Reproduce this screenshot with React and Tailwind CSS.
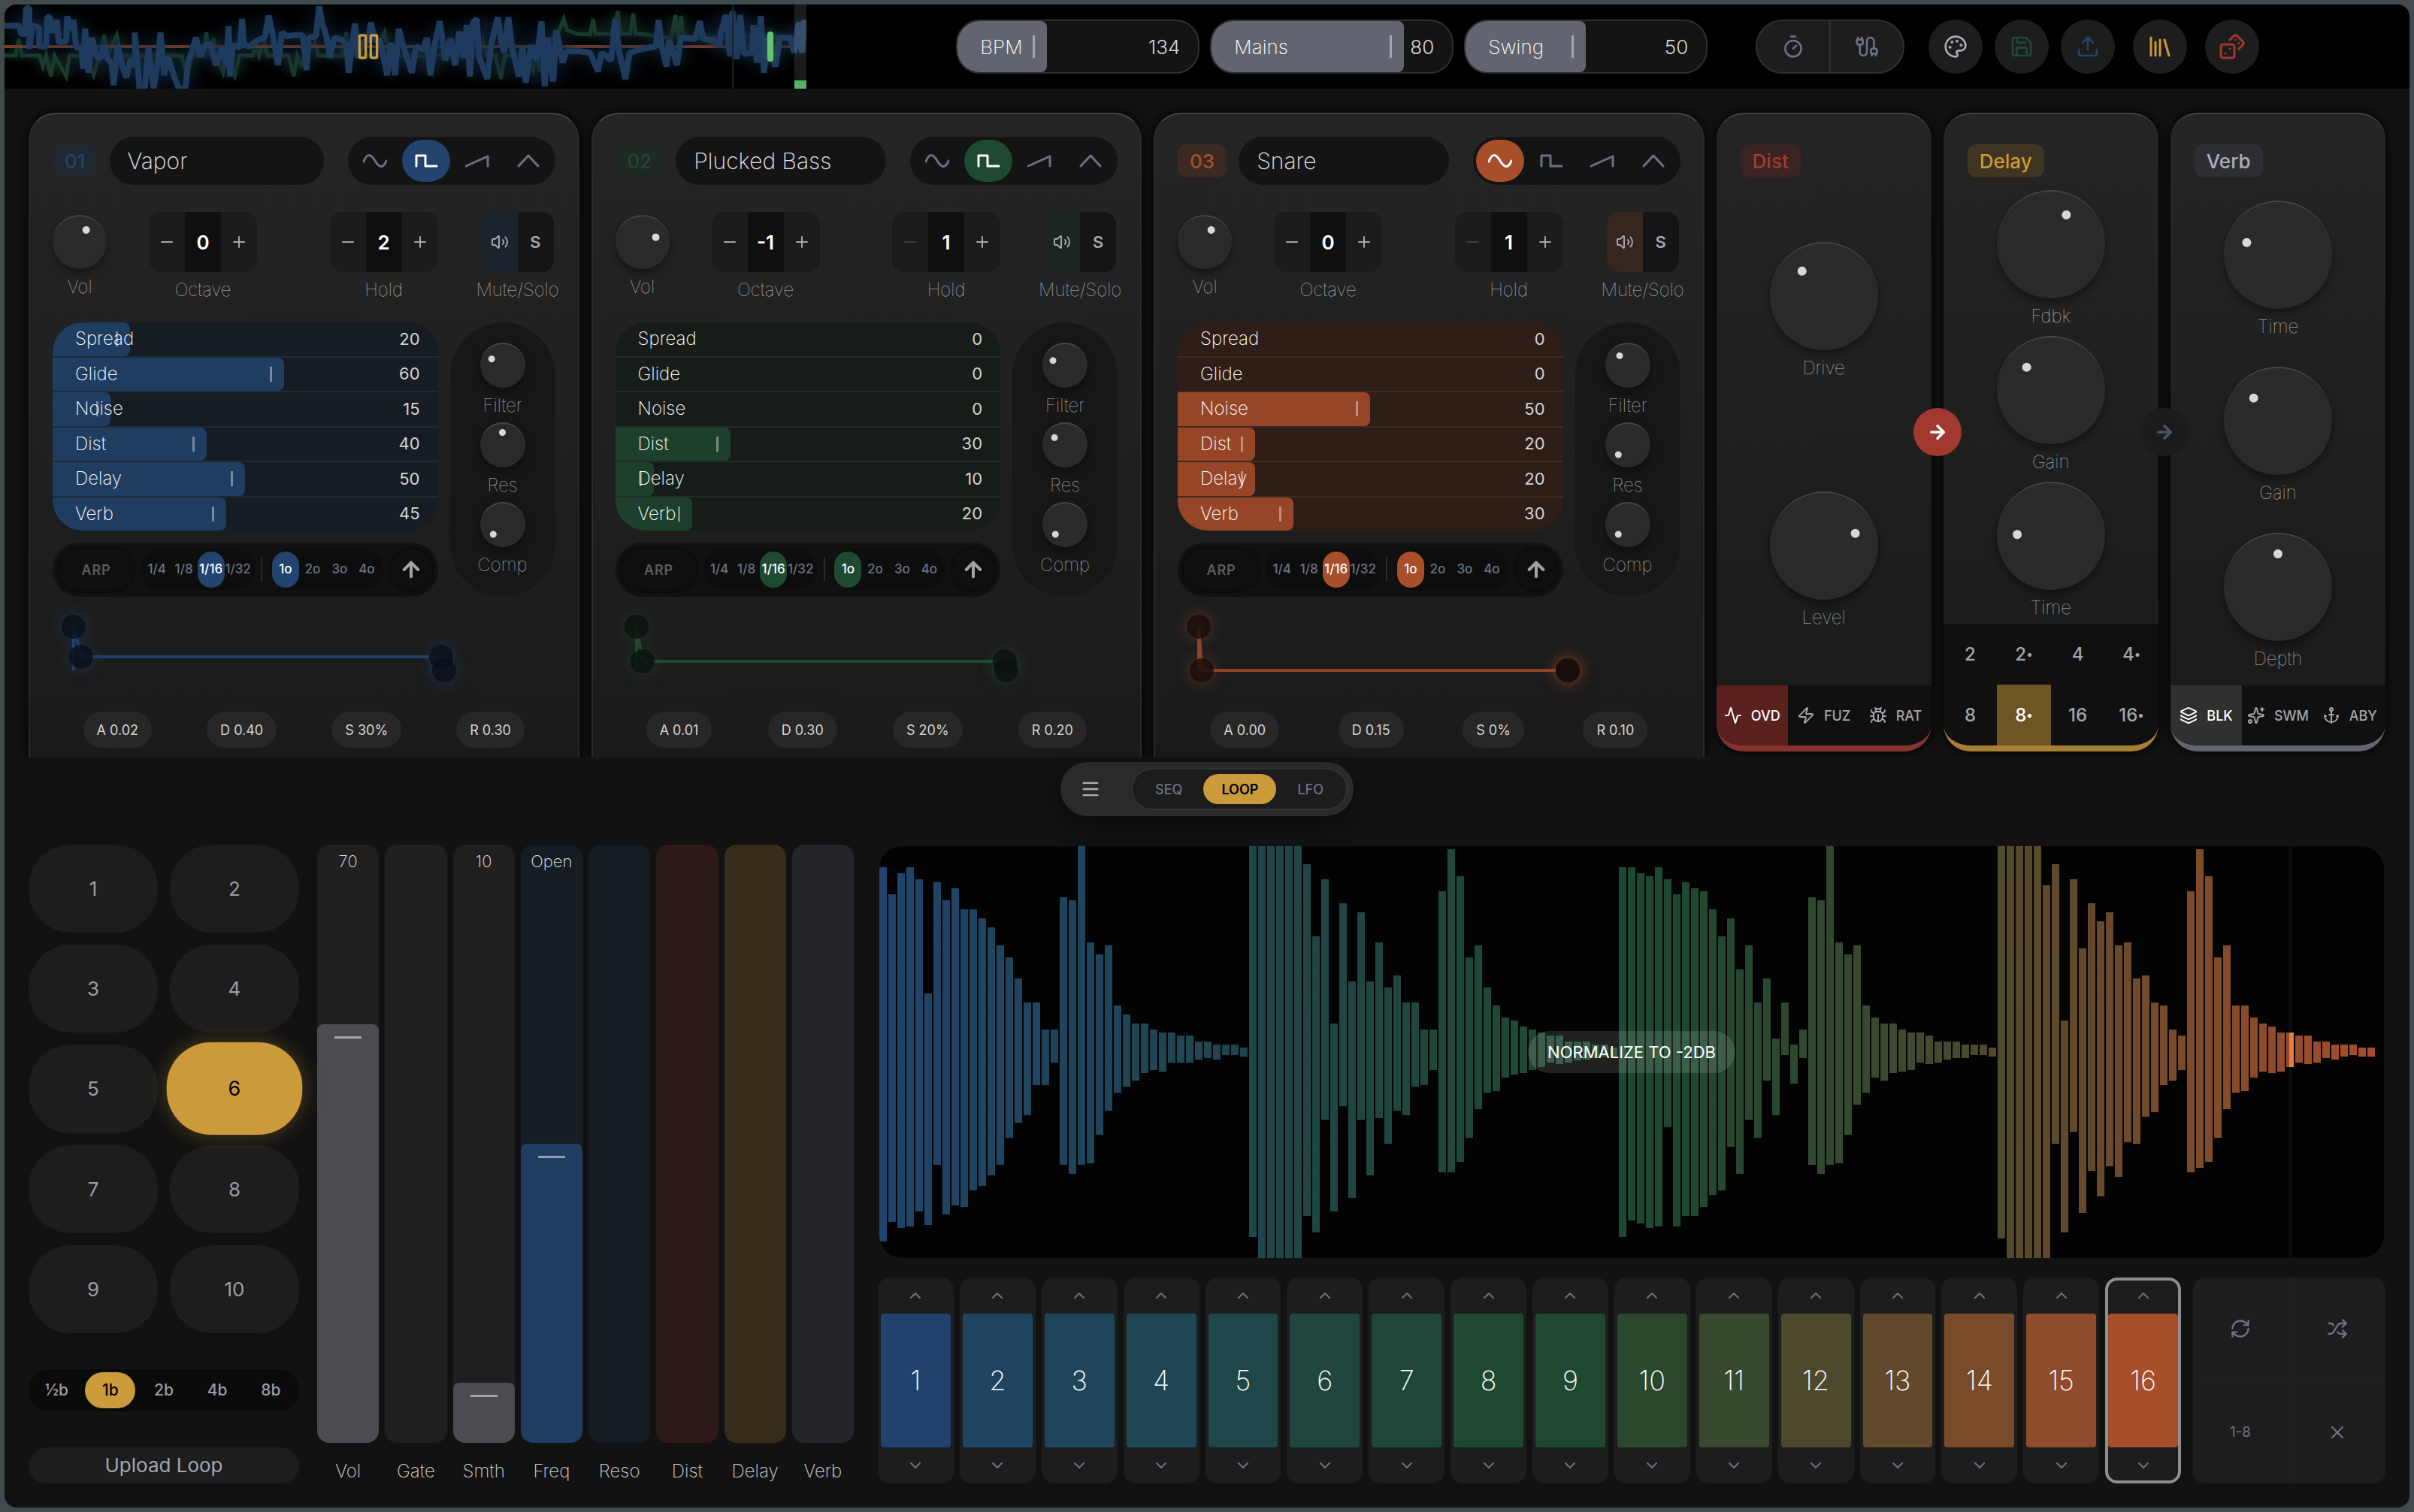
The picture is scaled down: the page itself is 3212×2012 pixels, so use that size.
import React, { useState } from 'react';
import {
  Activity,
  Anchor,
  ArrowRight,
  ArrowUp,
  Bug,
  Cable,
  ChevronDown,
  ChevronUp,
  Dices,
  Layers,
  Library,
  Menu,
  Minus,
  Palette,
  Pause,
  Plus,
  RefreshCw,
  Save,
  Shuffle,
  Sparkles,
  Timer,
  Upload,
  Volume2,
  X,
  Zap,
} from 'lucide-react';
import clsx from 'clsx';

const ACCENTS = {
  blue: {
    badge: 'bg-[#20282f] text-[#22426e]',
    active: 'bg-[#22446e]',
    fill: 'bg-[#1f3d61]',
    box: 'bg-[#161c23]',
    line: 'border-[#222a32]',
    mute: 'bg-[#1b242d]',
    stroke: '#1f4069',
    node: '#0a0f16',
    glow: '#22446e',
  },
  green: {
    badge: 'bg-[#202824] text-[#1e4931]',
    active: 'bg-[#1f4a32]',
    fill: 'bg-[#1d402d]',
    box: 'bg-[#161d19]',
    line: 'border-[#232c28]',
    mute: 'bg-[#1c2521]',
    stroke: '#1f4a32',
    node: '#0a120d',
    glow: '#1f4a32',
  },
  orange: {
    badge: 'bg-[#3a2a23] text-[#a84e2a]',
    active: 'bg-[#a84e2a]',
    fill: 'bg-[#964627]',
    box: 'bg-[#2f1d17]',
    line: 'border-[#3d2b25]',
    mute: 'bg-[#38251e]',
    stroke: '#8f4427',
    node: '#170d09',
    glow: '#8f4427',
  },
};

const SYNTHS = [
  {
    id: '01',
    name: 'Vapor',
    accent: 'blue',
    wave: 'square',
    vol: 60,
    octave: 0,
    hold: 2,
    params: { Spread: 20, Glide: 60, Noise: 15, Dist: 40, Delay: 50, Verb: 45 },
    knobs: { Filter: 28, Res: 50, Comp: 0 },
    env: [[28, 40], [38, 80], [517, 80], [521, 98]],
    adsr: ['A 0.02', 'D 0.40', 'S 30%', 'R 0.30'],
  },
  {
    id: '02',
    name: 'Plucked Bass',
    accent: 'green',
    wave: 'square',
    vol: 75,
    octave: -1,
    hold: 1,
    params: { Spread: 0, Glide: 0, Noise: 0, Dist: 30, Delay: 10, Verb: 20 },
    knobs: { Filter: 25, Res: 30, Comp: 0 },
    env: [[28, 40], [36, 86], [518, 86], [520, 98]],
    adsr: ['A 0.01', 'D 0.30', 'S 20%', 'R 0.20'],
  },
  {
    id: '03',
    name: 'Snare',
    accent: 'orange',
    wave: 'sine',
    vol: 60,
    octave: 0,
    hold: 1,
    params: { Spread: 0, Glide: 0, Noise: 50, Dist: 20, Delay: 20, Verb: 30 },
    knobs: { Filter: 35, Res: 0, Comp: 0 },
    env: [[28, 40], [32, 98], [519, 98], [519, 98]],
    adsr: ['A 0.00', 'D 0.15', 'S 0%', 'R 0.10'],
  },
];

const WAVES = {
  sine: 'M1 17C5 6 10 6 16 16S27 26 31 16',
  square: 'M3 23V9H15V23H30',
  saw: 'M1 23L30 10V23',
  tri: 'M3 23L16 9L29 23',
};

const FADERS = [
  { name: 'Vol', value: 70, top: '70', track: 'bg-[#1f1f1f]', fill: 'bg-[#4b4c51]' },
  { name: 'Gate', value: 0, top: '', track: 'bg-[#1f1f1f]', fill: 'bg-[#4b4c51]' },
  { name: 'Smth', value: 10, top: '10', track: 'bg-[#1f1f1f]', fill: 'bg-[#4b4c51]' },
  { name: 'Freq', value: 50, top: 'Open', track: 'bg-[#161c23]', fill: 'bg-[#1f3d61]' },
  { name: 'Reso', value: 0, top: '', track: 'bg-[#161c23]', fill: 'bg-[#1f3d61]' },
  { name: 'Dist', value: 0, top: '', track: 'bg-[#2e1919]', fill: 'bg-[#9f372e]' },
  { name: 'Delay', value: 0, top: '', track: 'bg-[#372b1a]', fill: 'bg-[#cb9a3a]' },
  { name: 'Verb', value: 0, top: '', track: 'bg-[#24252a]', fill: 'bg-[#62656f]' },
];

const SLICES = [
  '#20426c', '#1f4461', '#1f455b', '#1f4654', '#1f4648', '#1f4740', '#1f4738', '#1e4930',
  '#1e4830', '#2b482f', '#39492e', '#4c492c', '#62492b', '#794b2a', '#904b2a', '#a84e2a',
];

// [above, below] the centre line
const PEAKS = [
  [246, 252], [210, 226], [238, 234], [246, 232], [230, 212], [78, 230], [226, 150], [202, 216],
  [218, 204], [190, 206], [190, 184], [178, 178], [166, 164], [142, 150], [126, 114], [98, 94],
  [66, 84], [66, 44], [30, 44], [30, 14], [206, 150], [202, 162], [274, 150], [146, 148],
  [130, 110], [142, 78], [62, 54], [50, 46], [38, 38], [38, 28], [30, 24], [26, 26],
  [26, 14], [22, 14], [22, 14], [14, 10], [14, 8], [10, 10], [10, 4], [10, 4],
  [6, 6], [274, 246], [274, 274], [274, 274], [274, 274], [274, 274], [274, 274], [250, 218],
  [154, 240], [230, 90], [38, 212], [198, 72], [94, 194], [186, 90], [94, 164], [146, 88],
  [86, 122], [102, 78], [66, 84], [66, 46], [30, 44], [30, 24], [214, 160], [270, 160],
  [234, 146], [126, 114], [142, 76], [86, 54], [62, 52], [46, 34], [42, 30], [34, 28],
  [30, 24], [26, 20], [22, 14], [22, 16], [14, 14], [14, 11], [14, 10], [10, 8],
  [10, 6], [6, 6], [246, 246], [246, 224], [238, 228], [234, 234], [246, 232], [230, 100],
  [210, 232], [226, 218], [218, 218], [214, 206], [190, 190], [154, 184], [178, 126], [110, 162],
  [142, 90], [66, 114], [98, 38], [18, 84], [66, 4], [10, 42], [30, 8], [206, 150],
  [202, 162], [274, 150], [146, 148], [130, 110], [142, 70], [62, 54], [46, 34], [38, 38],
  [38, 28], [30, 26], [26, 24], [26, 14], [22, 16], [14, 14], [14, 10], [14, 8],
  [10, 8], [10, 4], [10, 4], [6, 6], [274, 248], [274, 274], [274, 274], [274, 274],
  [274, 274], [222, 274], [250, 122], [42, 240], [230, 106], [138, 214], [198, 158], [174, 192],
  [186, 152], [142, 166], [146, 120], [98, 122], [102, 86], [66, 80], [62, 44], [30, 38],
  [22, 24], [214, 160], [270, 154], [234, 146], [126, 114], [142, 76], [62, 54], [62, 52],
  [46, 34], [38, 26], [34, 28], [26, 26], [26, 20], [22, 14], [22, 16], [14, 14],
  [14, 8], [10, 10], [10, 6], [10, 4], [6, 6], [6, 6],
];

function HiddenRange({ label, value, min = 0, max = 100 }) {
  return (
    <input
      type="range"
      aria-label={label}
      min={min}
      max={max}
      defaultValue={value}
      className="absolute inset-0 w-full h-full opacity-0 cursor-pointer"
    />
  );
}

function Knob({ label, value, size, dot, className }) {
  return (
    <div className={clsx('flex flex-col items-center', className)}>
      <div
        className={clsx(
          'relative rounded-full bg-[#2a2a2a] border-t-2 border-t-[#454545] shadow-[0_6px_12px_rgba(0,0,0,0.4)]',
          size
        )}
      >
        <div
          className="absolute inset-0 flex justify-center"
          style={{ transform: `rotate(${value * 2.7 - 135}deg)` }}
        >
          <div className={clsx('rounded-full bg-[#d8d8d8]', dot)} />
        </div>
        <HiddenRange label={label} value={value} />
      </div>
      <span className="mt-2 text-2xl leading-8 font-thin text-[#c4c4c4]">{label}</span>
    </div>
  );
}

function TopSlider({ label, value, percent, max }) {
  return (
    <div className="relative w-[324px] h-18 rounded-[32px] border-2 border-[#2f3034] bg-[#141414] overflow-hidden flex items-center justify-between pl-[30px] pr-6 text-[26px]">
      <div
        className="absolute inset-y-0 left-0 rounded-r-lg bg-[#62656f] flex items-center justify-end pr-4"
        style={{ width: `${percent}%` }}
      >
        <span className="w-[3px] h-[30px] bg-[#a3a6ad]" />
      </div>
      <span className="relative font-extralight text-white">{label}</span>
      <span className="relative text-[#d6d6d6] font-light">{value}</span>
      <HiddenRange label={label} value={value} max={max} />
    </div>
  );
}

function RoundButton({ label, className, children }) {
  return (
    <button
      aria-label={label}
      className={clsx('size-18 rounded-full bg-[#1d1d1d] flex items-center justify-center', className)}
    >
      {children}
    </button>
  );
}

const SCOPE_BLUE =
  '9,103 38,103 40,135 48,135 50,32 56,32 56,195 62,100 75,112 75,185 88,185 90,68 95,68 100,130 108,80 112,170 126,165 128,65 133,120 140,80 145,190 155,190 158,275 162,115 168,290 175,150 185,230 192,230 197,180 205,235 212,250 216,340 224,180 232,260 240,310 248,235 258,265 256,130 262,260 265,354 275,354 282,190 292,352 300,240 305,130 312,300 320,230 330,300 340,354 352,354 358,240 364,210 372,150 380,225 390,180 400,175 410,260 422,190 430,265 434,105 437,305 442,180 455,190 460,75 463,180 474,185 490,160 503,150 510,62 518,140 528,260 535,130 545,145 560,140 575,140 582,280 586,150 600,145 606,25 612,95 620,145 626,230 635,150 650,160 658,180 662,290 668,185 674,95 680,230 688,170 700,160 704,90 712,160 722,165 735,300 742,170 750,300 757,115 765,180 782,290 790,185 805,200 810,150 817,300 825,180 835,85 845,240 855,155 864,260 872,125 880,230 886,100 892,305 898,90 905,75 910,230 925,315 932,180 945,70 952,170 957,210 965,70 972,190 985,305 992,185 998,330 1008,180 1018,240 1028,85 1034,345 1040,150 1050,325 1056,120 1068,250 1075,205 1100,205 1120,210 1135,285 1142,210 1160,240 1168,75 1175,205 1187,315 1195,210 1220,195 1245,185 1250,80 1256,185 1265,265 1270,160 1285,260 1292,150 1320,155 1328,85 1335,155 1355,160 1365,185 1368,130 1378,60 1385,220 1390,45 1398,235 1405,60 1412,215 1427,210 1430,100 1437,250 1444,65 1450,290 1457,150 1472,265 1480,150 1500,150 1507,210 1516,90 1522,210 1526,80 1530,150';

const SCOPE_GREEN =
  '9,222 30,222 36,155 42,222 75,222 82,265 88,222 97,305 104,222 126,305 132,222 150,222 165,222 178,300 190,222 198,140 204,222 222,140 230,222 330,222 345,222 355,300 365,222 388,222 392,130 398,222 406,155 412,222 424,290 432,222 446,300 455,222 480,222 486,165 492,222 502,170 508,222 548,222 558,305 564,222 572,260 580,222 598,170 604,222 650,222 657,130 663,222 710,222 730,130 738,222 810,222 818,300 826,222 900,222 916,160 924,222 940,222 951,315 958,222 1000,222 1012,280 1018,222 1026,285 1034,190 1048,150 1060,130 1070,75 1076,120 1095,135 1120,138 1126,75 1130,135 1160,135 1173,45 1178,135 1196,135 1202,55 1206,135 1230,138 1250,148 1274,150 1282,60 1286,150 1293,65 1297,150 1345,150 1350,190 1354,150 1382,150 1386,225 1390,150 1507,146 1530,150';

function Scope() {
  return (
    <button aria-label="Pause" className="relative w-1/3 h-28 overflow-hidden bg-black flex items-center">
      <svg
        viewBox="9 18 1521 336"
        preserveAspectRatio="none"
        className="absolute inset-0 w-full h-full"
        fill="none"
      >
        <g style={{ filter: 'drop-shadow(0 0 14px #1b3a2c)' }}>
          <polyline points={SCOPE_GREEN} stroke="#1b3a2c" strokeWidth="5" vectorEffect="non-scaling-stroke" />
        </g>
        <path d="M9 186H1507" stroke="#7d3f2a" strokeWidth="4" vectorEffect="non-scaling-stroke" />
        <g style={{ filter: 'drop-shadow(0 0 20px #10253d)' }}>
          <polyline
            points={SCOPE_BLUE}
            stroke="#1e3a5c"
            strokeWidth="8"
            strokeLinejoin="bevel"
            vectorEffect="non-scaling-stroke"
          />
        </g>
        <path d="M1391 18V354" stroke="#1c2229" strokeWidth="2" vectorEffect="non-scaling-stroke" />
      </svg>
      <div className="absolute inset-y-0 right-0 w-4 bg-white/10 flex items-end">
        <div className="w-full h-[11px] bg-[#55b269]" />
      </div>
      <div className="absolute right-11 w-2 h-10 rounded-full bg-[#62c474] shadow-[0_0_12px_#2f6d5b]" />
      <Pause size={40} className="relative ml-[464px] text-[#cb9a3a]" />
    </button>
  );
}

function TopBar() {
  return (
    <header className="flex items-center h-28 bg-black">
      <Scope />
      <div className="flex-1 flex items-center justify-center">
        <div className="flex gap-[14px]">
          <TopSlider label="BPM" value={134} percent={37} max={300} />
          <TopSlider label="Mains" value={80} percent={80} max={100} />
          <TopSlider label="Swing" value={50} percent={50} max={100} />
        </div>
        <div className="ml-16 flex w-[198px] h-18 rounded-full border-2 border-[#2f3034] bg-[#1d1d1d] text-gray-500">
          <button aria-label="Metronome" className="flex-1 flex items-center justify-center border-r-2 border-[#2f3034]">
            <Timer size={32} />
          </button>
          <button aria-label="Midi" className="flex-1 flex items-center justify-center">
            <Cable size={32} />
          </button>
        </div>
        <RoundButton label="Theme" className="ml-8 text-[#abaeb6]">
          <Palette size={32} />
        </RoundButton>
        <RoundButton label="Save" className="ml-4 text-[#1f4a32]">
          <Save size={32} />
        </RoundButton>
        <RoundButton label="Export" className="ml-4 text-[#22446e]">
          <Upload size={32} />
        </RoundButton>
        <RoundButton label="Library" className="ml-6 text-[#cb9a3a]">
          <Library size={36} />
        </RoundButton>
        <RoundButton label="Randomize" className="ml-6 text-[#a1392f]">
          <Dices size={36} />
        </RoundButton>
      </div>
    </header>
  );
}

function Stepper({ label, value, min }) {
  return (
    <div className="flex flex-col items-center">
      <div className="flex h-20 rounded-2xl overflow-hidden bg-[#1b1b1b] text-[#a3a6ad]">
        <button
          aria-label={`${label} down`}
          disabled={value === min}
          className="w-12 flex items-center justify-center disabled:text-[#3f3f3f]"
        >
          <Minus size={24} />
        </button>
        <output className="w-12 flex items-center justify-center bg-[#0f0f0f] text-[26px] font-semibold text-white">
          {value}
        </output>
        <button aria-label={`${label} up`} className="w-12 flex items-center justify-center">
          <Plus size={24} />
        </button>
      </div>
      <span className="mt-2 text-2xl leading-8 font-thin text-[#c4c4c4]">{label}</span>
    </div>
  );
}

function ParamRow({ label, value, accent, last }) {
  return (
    <div
      className={clsx(
        'relative flex-1 flex items-center justify-between pl-[30px] pr-6',
        !last && 'border-b-2',
        accent.line
      )}
    >
      {value > 0 && (
        <div
          className={clsx('absolute inset-y-0 left-0 rounded-r-lg flex items-center justify-end pr-4', accent.fill)}
          style={{ width: `${value}%` }}
        >
          <span className="w-[3px] h-5 bg-white/40" />
        </div>
      )}
      <span className="relative text-2xl font-extralight text-white">{label}</span>
      <span className="relative text-[22px] text-[#d4d4d4]">{value}</span>
      <HiddenRange label={label} value={value} />
    </div>
  );
}

function PillGroup({ items, active, onSelect, accent }) {
  return (
    <div className="flex p-1 rounded-full bg-[#0d0d0d]">
      {items.map((item) => (
        <button
          key={item}
          onClick={() => onSelect(item)}
          className={clsx(
            'w-9 h-12 rounded-[18px] flex items-center justify-center text-[17px] font-medium whitespace-nowrap',
            item === active ? ['text-white', accent.active] : 'text-gray-500'
          )}
        >
          {item}
        </button>
      ))}
    </div>
  );
}

function ArpBar({ accent }) {
  const [rate, setRate] = useState('1/16');
  const [range, setRange] = useState('1o');

  return (
    <div className="flex items-center justify-between h-18 px-2 rounded-full bg-[#111111]">
      <button className="w-25 h-14 rounded-full bg-[#0f0f0f] shadow-[0_0_4px_black] text-[18px] font-semibold tracking-wider text-[#5c5c5c]">
        ARP
      </button>
      <PillGroup items={['1/4', '1/8', '1/16', '1/32']} active={rate} onSelect={setRate} accent={accent} />
      <div className="w-[2px] h-8 bg-[#2c2c2c]" />
      <PillGroup items={['1o', '2o', '3o', '4o']} active={range} onSelect={setRange} accent={accent} />
      <button
        aria-label="Arp direction"
        className="size-14 rounded-full bg-[#0f0f0f] shadow-[0_0_4px_black] flex items-center justify-center text-[#a3a3a3]"
      >
        <ArrowUp size={32} strokeWidth={3} />
      </button>
    </div>
  );
}

function Envelope({ points, accent }) {
  const start = [points[0][0], 98];
  const path = [start, ...points].map((p) => p.join(',')).join(' ');

  return (
    <svg className="w-full h-[153px] overflow-visible" fill="none">
      {points.map(([x, y], i) => (
        <circle key={i} cx={x} cy={y} r="17" fill={accent.glow} fillOpacity="0.5" style={{ filter: 'blur(9px)' }} />
      ))}
      <polyline points={path} stroke={accent.stroke} strokeWidth="4" />
      {points.map(([x, y], i) => (
        <circle key={i} cx={x} cy={y} r="16" fill={accent.node} fillOpacity="0.8" />
      ))}
    </svg>
  );
}

function SynthPanel({ synth }) {
  const [wave, setWave] = useState(synth.wave);
  const accent = ACCENTS[synth.accent];
  const params = Object.entries(synth.params);

  return (
    <section className="min-w-0 h-[858px] rounded-t-[36px] border-2 border-b-0 border-[#2b2b2b] border-t-[#444444] bg-linear-to-b from-[#252525] to-[#1a1a1a] px-[30px] pt-[30px] shadow-[0_0_16px_black]">
      <div className="flex items-center">
        <span className={clsx('h-11 px-4 rounded-xl flex items-center text-[26px] font-medium', accent.badge)}>
          {synth.id}
        </span>
        <input
          aria-label="Synth name"
          defaultValue={synth.name}
          className="ml-4 mr-8 flex-1 min-w-0 h-16 px-6 rounded-full bg-[#141414] text-[30px] font-extralight text-[#e5e5e5] outline-none"
        />
        <div className="flex gap-1 p-1 rounded-full bg-[#141414]">
          {Object.entries(WAVES).map(([name, d]) => (
            <button
              key={name}
              aria-label={name}
              onClick={() => setWave(name)}
              className={clsx(
                'w-16 h-14 rounded-full flex items-center justify-center',
                wave === name ? ['text-white', accent.active] : 'text-gray-500'
              )}
            >
              <svg
                width="32"
                height="32"
                viewBox="0 0 32 32"
                fill="none"
                stroke="currentColor"
                strokeWidth="3"
                strokeLinecap="round"
                strokeLinejoin="round"
              >
                <path d={d} />
              </svg>
            </button>
          ))}
        </div>
      </div>

      <div className="mt-9 flex justify-between">
        <div className="flex gap-14">
          <Knob label="Vol" value={synth.vol} size="size-18" dot="size-[10px] mt-[11px]" className="pt-1" />
          <Stepper label="Octave" value={synth.octave} min={-3} />
        </div>
        <div className="flex gap-14">
          <Stepper label="Hold" value={synth.hold} min={1} />
          <div className="w-25 flex flex-col items-center">
            <div className="flex h-20 rounded-2xl overflow-hidden text-[#a3a6ad]">
              <button aria-label="Mute" className={clsx('w-12 flex items-center justify-center', accent.mute)}>
                <Volume2 size={24} />
              </button>
              <button aria-label="Solo" className="w-12 bg-[#151515] text-[22px] font-semibold">
                S
              </button>
            </div>
            <span className="mt-2 text-2xl leading-8 font-thin whitespace-nowrap text-[#c4c4c4]">Mute/Solo</span>
          </div>
        </div>
      </div>

      <div className="mt-[27px] flex gap-4">
        <div className="flex-1 flex flex-col gap-4">
          <div className={clsx('h-[277px] rounded-[40px] overflow-hidden flex flex-col', accent.box)}>
            {params.map(([label, value], i) => (
              <ParamRow key={label} label={label} value={value} accent={accent} last={i === params.length - 1} />
            ))}
          </div>
          <ArpBar accent={accent} />
        </div>
        <div className="w-35 rounded-full bg-[#171717] flex flex-col items-center justify-center gap-[6px]">
          {Object.entries(synth.knobs).map(([label, value]) => (
            <Knob key={label} label={label} value={value} size="size-15" dot="size-[9px] mt-[7px]" />
          ))}
        </div>
      </div>

      <Envelope points={synth.env} accent={accent} />

      <div className="flex justify-around px-1">
        {synth.adsr.map((text) => (
          <span key={text} className="h-12 px-[18px] rounded-full bg-[#272727] flex items-center text-[18px] text-[#d4d4d4]">
            {text}
          </span>
        ))}
      </div>
    </section>
  );
}

function EffectPanel({ title, badge, border, knobs, children, link }) {
  return (
    <section className="relative min-w-0 h-[850px]">
      <div
        className={clsx(
          'h-full flex flex-col rounded-[36px] overflow-hidden border-t-2 border-t-[#444444] border-b-8 bg-linear-to-b from-[#252525] to-[#1a1a1a] shadow-[0_0_16px_black]',
          border
        )}
      >
        <div className="px-8 pt-10 pb-3">
          <h2 className={clsx('flex w-fit items-center h-11 px-4 rounded-xl text-[26px] font-medium', badge)}>
            {title}
          </h2>
        </div>
        <div className="flex-1 flex flex-col justify-around">
          {knobs.map(([label, value]) => (
            <Knob key={label} label={label} value={value} size="size-36" dot="size-3 mt-5" />
          ))}
        </div>
        {children}
      </div>
      {link && (
        <button
          aria-label={`Link ${title}`}
          className={clsx(
            'absolute z-10 top-[393px] -right-10 size-16 rounded-full flex items-center justify-center',
            link
          )}
        >
          <ArrowRight size={28} strokeWidth={3} />
        </button>
      )}
    </section>
  );
}

function ModeRow({ modes, active }) {
  return (
    <div className="flex h-20 bg-[#101010]">
      {modes.map(([label, Icon]) => (
        <button
          key={label}
          className={clsx(
            'flex-1 flex items-center justify-center gap-3 text-[18px] font-medium',
            label === modes[0][0] ? ['text-white', active] : 'text-[#a3a6ad]'
          )}
        >
          <Icon size={24} />
          {label}
        </button>
      ))}
    </div>
  );
}

function Effects() {
  const times = ['2', '2•', '4', '4•', '8', '8•', '16', '16•'];

  return (
    <>
      <EffectPanel
        title="Dist"
        badge="bg-[#3a2322] text-[#a1392f]"
        border="border-b-[#85332c]"
        knobs={[['Drive', 35], ['Level', 75]]}
        link="bg-[#a1392f] text-white"
      >
        <ModeRow modes={[['OVD', Activity], ['FUZ', Zap], ['RAT', Bug]]} active="bg-[#5a211e]" />
      </EffectPanel>
      <EffectPanel
        title="Delay"
        badge="bg-[#403422] text-[#cb9a3a]"
        border="border-b-[#a57f33]"
        knobs={[['Fdbk', 60], ['Gain', 33], ['Time', 18]]}
        link="bg-[#1b1b1b] text-gray-600"
      >
        <div className="grid grid-cols-4 bg-[#101010] text-2xl font-medium text-[#a3a6ad]">
          {times.map((time) => (
            <button
              key={time}
              className={clsx('h-[81px] flex items-center justify-center', time === '8•' && 'bg-[#6e5524] text-white')}
            >
              {time.replace('•', '')}
              {time.endsWith('•') && <span className="text-[16px]">•</span>}
            </button>
          ))}
        </div>
      </EffectPanel>
      <EffectPanel
        title="Verb"
        badge="bg-[#2d2e33] text-[#abaeb6]"
        border="border-b-[#62656f]"
        knobs={[['Time', 25], ['Gain', 33], ['Depth', 50]]}
      >
        <ModeRow modes={[['BLK', Layers], ['SWM', Sparkles], ['ABY', Anchor]]} active="bg-[#303030]" />
      </EffectPanel>
    </>
  );
}

function ViewSwitch() {
  const [view, setView] = useState('LOOP');

  return (
    <div className="mx-auto flex items-center h-18 pl-[26px] pr-2 rounded-full bg-[#2a2a2a] shadow-[0_12px_30px_rgba(0,0,0,0.45)]">
      <button aria-label="Menu" className="text-[#abaeb6]">
        <Menu size={28} />
      </button>
      <div className="ml-10 flex gap-1 p-[6px] rounded-full border-2 border-[#303134] bg-[#1c1c1c]">
        {['SEQ', 'LOOP', 'LFO'].map((name) => (
          <button
            key={name}
            onClick={() => setView(name)}
            className={clsx(
              'h-10 px-6 rounded-full text-[18px]',
              view === name ? 'bg-[#cb9a3a] text-black font-semibold' : 'text-gray-500 font-medium'
            )}
          >
            {name}
          </button>
        ))}
      </div>
    </div>
  );
}

function LoopPads() {
  const [pad, setPad] = useState(6);
  const [bars, setBars] = useState('1b');

  return (
    <div className="w-[360px] shrink-0 flex flex-col gap-12">
      <div className="flex-1 grid grid-cols-2 auto-rows-fr gap-4">
        {Array.from({ length: 10 }, (_, i) => i + 1).map((n) => (
          <button
            key={n}
            onClick={() => setPad(n)}
            className={clsx(
              'rounded-[56px] text-[26px]',
              n === pad
                ? 'z-10 scale-105 bg-[#cb9a3a] text-black shadow-[0_0_24px_rgba(203,154,58,0.35)]'
                : 'bg-[#1d1d1d] text-[#9a9da6]'
            )}
          >
            {n}
          </button>
        ))}
      </div>
      <div className="flex gap-1 p-1 h-14 rounded-full bg-[#0a0a0a]">
        {['½b', '1b', '2b', '4b', '8b'].map((b) => (
          <button
            key={b}
            onClick={() => setBars(b)}
            className={clsx(
              'flex-1 rounded-full text-[21px] font-medium',
              b === bars ? 'bg-[#cb9a3a] text-black' : 'text-[#9a9da6]'
            )}
          >
            {b}
          </button>
        ))}
      </div>
      <button className="h-12 rounded-full bg-[#1d1d1d] text-[26px] leading-none text-[#a3a6ad]">Upload Loop</button>
    </div>
  );
}

function Faders() {
  return (
    <div className="w-[714px] shrink-0 flex gap-2">
      {FADERS.map(({ name, value, top, track, fill }) => (
        <div key={name} className="flex-1 flex flex-col items-center">
          <div className={clsx('relative w-full flex-1 rounded-2xl overflow-hidden flex flex-col justify-end', track)}>
            {value > 0 && (
              <div
                className={clsx('flex justify-center rounded-t-lg pt-4', fill)}
                style={{ height: `${value}%` }}
              >
                <span className="w-9 h-[3px] bg-white/50" />
              </div>
            )}
            <span className="absolute top-[6px] inset-x-0 text-center text-[22px] leading-8 font-extralight text-[#e5e5e5]">
              {top}
            </span>
            <HiddenRange label={`Loop ${name}`} value={value} />
          </div>
          <span className="mt-[22px] text-2xl leading-8 font-extralight text-[#d4d4d4]">{name}</span>
        </div>
      ))}
    </div>
  );
}

function Waveform() {
  return (
    <div className="relative flex-1 rounded-[32px] border-2 border-[#151515] bg-[#030303] overflow-hidden">
      <svg viewBox="0 0 2002 548" preserveAspectRatio="none" className="absolute inset-0 w-full h-full">
        <defs>
          <linearGradient id="slices" gradientUnits="userSpaceOnUse" x1="0" x2="1992" y1="0" y2="0">
            {SLICES.map((color, i) => (
              <stop key={i} offset={i / 15} stopColor={color} />
            ))}
          </linearGradient>
        </defs>
        <g fill="url(#slices)">
          {PEAKS.map(([up, down], i) => (
            <rect key={i} x={i * 12} y={274 - up} width="10" height={up + down} />
          ))}
        </g>
        <rect x="1876" y="0" width="4" height="548" fill="#ffffff" fillOpacity="0.04" />
        <rect x="1876" y="248" width="6" height="46" fill="#ea7c40" />
      </svg>
      <div className="h-full flex items-center justify-center">
        <button className="relative w-[276px] h-14 rounded-full bg-white/12 text-[22px] text-white">
          NORMALIZE TO -2DB
        </button>
      </div>
    </div>
  );
}

function Slices() {
  const current = 16;

  return (
    <div className="h-[274px] flex gap-4">
      <div className="flex-1 flex gap-2">
        {SLICES.map((color, i) => (
          <div
            key={i}
            className={clsx(
              'flex-1 flex flex-col rounded-2xl bg-[#1d1d1d] border-4',
              i + 1 === current ? 'border-[#8e8e8e]' : 'border-transparent'
            )}
          >
            <button aria-label={`Slice ${i + 1} up`} className="h-10 mb-1 flex items-center justify-center text-gray-500">
              <ChevronUp size={24} />
            </button>
            <button
              className="flex-1 rounded-sm text-4xl font-extralight text-white"
              style={{ backgroundColor: color }}
            >
              {i + 1}
            </button>
            <button aria-label={`Slice ${i + 1} down`} className="h-10 mt-1 flex items-center justify-center text-gray-500">
              <ChevronDown size={24} />
            </button>
          </div>
        ))}
      </div>
      <div className="w-64 grid grid-cols-2 rounded-2xl overflow-hidden bg-[#1d1d1d] text-gray-500">
        <button aria-label="Reset" className="flex items-center justify-center border-r-2 border-b-2 border-[#1f1f1f]">
          <RefreshCw size={28} />
        </button>
        <button aria-label="Shuffle" className="flex items-center justify-center border-b-2 border-[#1f1f1f]">
          <Shuffle size={28} />
        </button>
        <button className="flex items-center justify-center border-r-2 border-[#1f1f1f] text-[19px]">1-8</button>
        <button aria-label="Clear" className="flex items-center justify-center">
          <X size={28} />
        </button>
      </div>
    </div>
  );
}

export default function App() {
  return (
    <div className="min-h-screen flex p-[6px] bg-[#3f4b4c] font-[Inter,sans-serif]">
      <div className="flex-1 min-w-0 flex flex-col rounded-2xl overflow-hidden bg-[#121212]">
        <TopBar />
        <main className="flex-1 flex flex-col">
          <div className="grid grid-cols-[repeat(3,64fr)_repeat(3,25fr)] gap-4 px-8 pt-8 overflow-hidden">
            {SYNTHS.map((synth) => (
              <SynthPanel key={synth.id} synth={synth} />
            ))}
            <Effects />
          </div>
          <div className="flex-1 flex flex-col px-8 pt-[6px] pb-8">
            <ViewSwitch />
            <div className="flex-1 mt-[38px] flex">
              <LoopPads />
              <div className="ml-6 flex">
                <Faders />
              </div>
              <div className="ml-8 flex-1 min-w-0 flex flex-col gap-6">
                <Waveform />
                <Slices />
              </div>
            </div>
          </div>
        </main>
      </div>
    </div>
  );
}
